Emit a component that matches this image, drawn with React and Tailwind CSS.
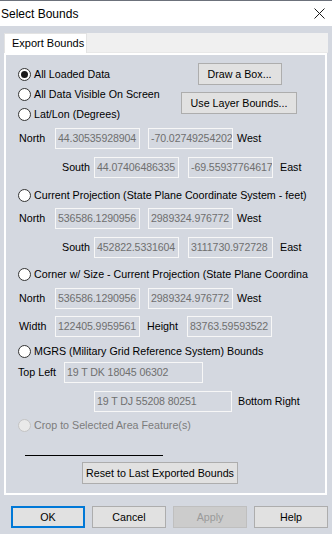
import { useState } from 'react';

const FONT = { fontFamily: '"Liberation Sans", Arial, sans-serif' };

function Radio({ checked, disabled, label, onClick }) {
  return (
    <div className="flex items-center h-[20px] pl-[12px]" onClick={disabled ? undefined : onClick}>
      <span
        className={`flex items-center justify-center w-[13px] h-[13px] rounded-full border ${
          disabled ? 'border-[#c4c4c4] bg-[#e9e9e9]' : 'border-[#333333] bg-white'
        }`}
      >
        {checked && <span className="w-[7px] h-[7px] rounded-full bg-[#1a1a1a]" />}
      </span>
      <span className={`ml-[3px] whitespace-nowrap ${disabled ? 'text-[#7c7c7c]' : 'text-black'}`}>{label}</span>
    </div>
  );
}

function Box({ value, w = 'w-[85px]' }) {
  return (
    <div className={`${w} h-[21px] border border-[#f7f7f7] flex items-center pl-[2px] overflow-hidden whitespace-nowrap text-[#6f6f6f] text-[10.6px] tracking-[-0.1px]`}>
      {value}
    </div>
  );
}

function Btn({ children, className = '' }) {
  return (
    <div className={`flex items-center justify-center h-[22px] border border-[#adadad] bg-[#e1e1e1] text-black whitespace-nowrap ${className}`}>
      {children}
    </div>
  );
}

function NorthRow({ a, b, className = '' }) {
  return (
    <div className={`flex items-center pl-[13px] ${className}`}>
      <span className="w-[36px]">North</span>
      <Box value={a} />
      <span className="w-[8px]" />
      <Box value={b} />
      <span className="ml-[4px]">West</span>
    </div>
  );
}

function SouthRow({ a, b, className = '' }) {
  return (
    <div className={`flex items-center pl-[56px] ${className}`}>
      <span className="w-[32px]">South</span>
      <Box value={a} />
      <span className="w-[9px]" />
      <Box value={b} />
      <span className="ml-[7px]">East</span>
    </div>
  );
}

export default function App() {
  const [mode, setMode] = useState(0);

  return (
    <div className="w-[332px] h-[534px] bg-[#d4d8e0] text-[10.7px] leading-none overflow-hidden flex flex-col" style={FONT}>
      {/* title bar */}
      <div className="h-[26px] bg-white border-t border-[#6c717b] flex items-center justify-between pl-[1px] pr-[7px]">
        <span className="text-[12px] text-black">Select Bounds</span>
        <svg width="11" height="11" viewBox="0 0 11 11">
          <path d="M0.5 0.5 L10.5 10.5 M10.5 0.5 L0.5 10.5" stroke="#1a1a1a" strokeWidth="1" />
        </svg>
      </div>

      {/* tab strip */}
      <div className="mt-[7px] mx-[4px] flex h-[20px]">
        <div className="w-[83px] h-full bg-white border-t border-l border-r border-[#e3e3e3] flex items-center pl-[7px] text-[11px]">
          Export Bounds
        </div>
        <div className="flex-1 bg-[#f0f0f0] border-b border-[#e8e8e8]" />
      </div>

      {/* tab page */}
      <div className="mx-[4px] mr-[5px] h-[442px] border-2 border-white flex flex-col">
        <div className="flex mt-[8px]">
          <div className="flex flex-col pt-[1px] w-[170px]">
            <Radio checked={mode === 0} label="All Loaded Data" onClick={() => setMode(0)} />
            <Radio checked={mode === 1} label="All Data Visible On Screen" onClick={() => setMode(1)} />
            <Radio checked={mode === 2} label="Lat/Lon (Degrees)" onClick={() => setMode(2)} />
          </div>
          <div className="flex flex-col items-center w-[126px] gap-[7px]">
            <Btn className="w-[84px] ml-[1px]">Draw a Box...</Btn>
            <Btn className="w-[116px]">Use Layer Bounds...</Btn>
          </div>
        </div>

        <NorthRow a="44.30535928904" b="-70.02749254202" className="mt-[4px]" />
        <SouthRow a="44.07406486335" b="-69.55937764617" className="mt-[8px]" />

        <div className="mt-[7px]">
          <Radio checked={mode === 3} label="Current Projection (State Plane Coordinate System - feet)" onClick={() => setMode(3)} />
        </div>
        <NorthRow a="536586.1290956" b="2989324.976772" className="mt-[3px]" />
        <SouthRow a="452822.5331604" b="3111730.972728" className="mt-[8px]" />

        <div className="mt-[6px]">
          <Radio checked={mode === 4} label="Corner w/ Size - Current Projection (State Plane Coordina" onClick={() => setMode(4)} />
        </div>
        <NorthRow a="536586.1290956" b="2989324.976772" className="mt-[4px]" />
        <div className="flex items-center pl-[13px] mt-[7px]">
          <span className="w-[36px]">Width</span>
          <Box value="122405.9959561" />
          <span className="ml-[7px] w-[40px]">Height</span>
          <Box value="83763.59593522" />
        </div>

        <div className="mt-[4px]">
          <Radio checked={mode === 5} label="MGRS (Military Grid Reference System) Bounds" onClick={() => setMode(5)} />
        </div>
        <div className="flex items-center pl-[12px] mt-[1px]">
          <span className="w-[46px]">Top Left</span>
          <Box value="19 T DK 18045 06302" w="w-[139px]" />
        </div>
        <div className="flex items-center pl-[88px] mt-[8px]">
          <Box value="19 T DJ 55208 80251" w="w-[138px]" />
          <span className="ml-[6px]">Bottom Right</span>
        </div>

        <div className="mt-[3px]">
          <Radio disabled label="Crop to Selected Area Feature(s)" />
        </div>

        <div className="ml-[19px] mt-[20px] w-[138px] h-[1px] bg-black" />
        <Btn className="ml-[76px] mt-[6px] w-[156px] h-[21px]">Reset to Last Exported Bounds</Btn>
      </div>

      {/* bottom buttons */}
      <div className="flex gap-[7px] pl-[11px] mt-[11px]">
        <div className="w-[74px] h-[22px] border-2 border-[#0078d7] bg-[#e1e1e1] flex items-center justify-center">OK</div>
        <Btn className="w-[74px]">Cancel</Btn>
        <div className="w-[74px] h-[22px] border border-[#bfbfbf] bg-[#cccccc] flex items-center justify-center text-[#9a9a9a]">Apply</div>
        <Btn className="w-[74px]">Help</Btn>
      </div>
    </div>
  );
}
